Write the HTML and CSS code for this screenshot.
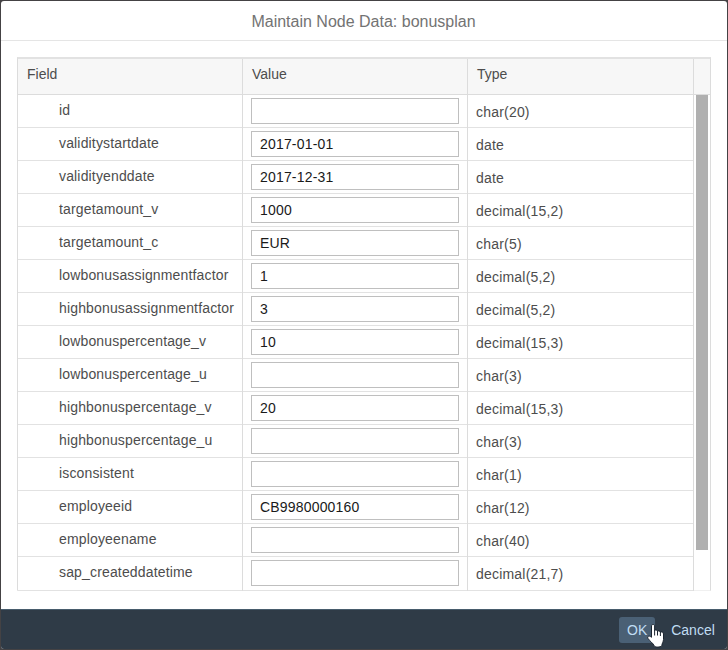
FILE: index.html
```
<!DOCTYPE html>
<html lang="en">
<head>
<meta charset="utf-8">
<title>Maintain Node Data: bonusplan</title>
<link rel="stylesheet" href="styles.css">
</head>
<body>
<div class="dialog">
  <header class="title"><span>Maintain Node Data: bonusplan</span></header>
  <main class="content">
    <div class="table">
      <div class="head">
        <div class="cell">Field</div><div class="cell">Value</div><div class="cell">Type</div><div class="corner"></div>
      </div>
      <div class="body">
        <div class="rows">
          <div class="row"><div class="field"><span>id</span></div><div class="value"><input type="text" value=""></div><div class="type"><span>char(20)</span></div></div>
          <div class="row"><div class="field"><span>validitystartdate</span></div><div class="value"><input type="text" value="2017-01-01"></div><div class="type"><span>date</span></div></div>
          <div class="row"><div class="field"><span>validityenddate</span></div><div class="value"><input type="text" value="2017-12-31"></div><div class="type"><span>date</span></div></div>
          <div class="row"><div class="field"><span>targetamount_v</span></div><div class="value"><input type="text" value="1000"></div><div class="type"><span>decimal(15,2)</span></div></div>
          <div class="row"><div class="field"><span>targetamount_c</span></div><div class="value"><input type="text" value="EUR"></div><div class="type"><span>char(5)</span></div></div>
          <div class="row"><div class="field"><span>lowbonusassignmentfactor</span></div><div class="value"><input type="text" value="1"></div><div class="type"><span>decimal(5,2)</span></div></div>
          <div class="row"><div class="field"><span>highbonusassignmentfactor</span></div><div class="value"><input type="text" value="3"></div><div class="type"><span>decimal(5,2)</span></div></div>
          <div class="row"><div class="field"><span>lowbonuspercentage_v</span></div><div class="value"><input type="text" value="10"></div><div class="type"><span>decimal(15,3)</span></div></div>
          <div class="row"><div class="field"><span>lowbonuspercentage_u</span></div><div class="value"><input type="text" value=""></div><div class="type"><span>char(3)</span></div></div>
          <div class="row"><div class="field"><span>highbonuspercentage_v</span></div><div class="value"><input type="text" value="20"></div><div class="type"><span>decimal(15,3)</span></div></div>
          <div class="row"><div class="field"><span>highbonuspercentage_u</span></div><div class="value"><input type="text" value=""></div><div class="type"><span>char(3)</span></div></div>
          <div class="row"><div class="field"><span>isconsistent</span></div><div class="value"><input type="text" value=""></div><div class="type"><span>char(1)</span></div></div>
          <div class="row"><div class="field"><span>employeeid</span></div><div class="value"><input type="text" value="CB9980000160"></div><div class="type"><span>char(12)</span></div></div>
          <div class="row"><div class="field"><span>employeename</span></div><div class="value"><input type="text" value=""></div><div class="type"><span>char(40)</span></div></div>
          <div class="row"><div class="field"><span>sap_createddatetime</span></div><div class="value"><input type="text" value=""></div><div class="type"><span>decimal(21,7)</span></div></div>
        </div>
        <div class="scroll"><div class="thumb"></div></div>
      </div>
    </div>
  </main>
  <footer class="footer">
    <button class="btn ok">OK</button><button class="btn cancel">Cancel</button>
  </footer>
</div>
<svg class="cursor" width="18" height="24" viewBox="0 0 18 24">
  <path d="M4.5 2C4.5 0 7.6 0 7.6 2V6.5C8.6 5.6 10.2 6 10.4 7.2C11.5 6.5 13 7 13.2 8.2C14.5 7.6 16.4 8 16.5 10V15.5C16.3 18 15 19.5 14.8 21.5C13.5 23.6 8 23.6 7 21.5C6.5 19.5 2.5 17 .8 14.2C.2 12 2.2 11.3 4.5 13.3Z" fill="#fff" stroke="#1c2530" stroke-width="1"/>
  <path d="M7.6 6V11.5M10.5 7V11.5M13.4 8V12" stroke="#1c2530" stroke-width="1" fill="none"/>
</svg>
</body>
</html>
```
FILE: styles.css
```
* { box-sizing: border-box; }
body {
  margin: 0;
  padding: 1px;
  height: 650px;
  overflow: hidden;
  background: #444244;
  color: #4d4d4d;
  font: 14px/18px "Liberation Sans", Arial, sans-serif;
}
.dialog {
  display: flex;
  flex-direction: column;
  width: 726px;
  height: 648px;
  border-radius: 3px;
  overflow: hidden;
  background: #fff;
}
.title {
  height: 40px;
  flex: none;
  padding-right: 1px;
  border-bottom: 1px solid #e5e5e5;
  text-align: center;
  color: #737373;
  font-size: 16px;
  line-height: 41px;
}
.content { flex: 1; padding: 16px; }
.table {
  width: 694px;
  height: 534px;
  border: 1px solid #dcdcdc;
  border-top: 2px solid #e2e2e2;
  border-bottom-color: #f0f0f0;
}
.head {
  display: grid;
  grid-template-columns: 225px 225px 226px 16px;
  height: 36px;
  background: #f7f7f7;
  border-bottom: 1px solid #dcdcdc;
}
.cell { padding: 6px 9px; border-right: 1px solid #dcdcdc; }
.body { display: flex; }
.rows { width: 676px; border-right: 1px solid #dcdcdc; }
.row {
  display: grid;
  grid-template-columns: 225px 225px 225px;
  height: 33px;
  border-bottom: 1px solid #e2e2e2;
}
.row:last-child { height: 34px; }
.field {
  padding: 6px 0 0 41px;
  border-right: 1px solid #dcdcdc;
  white-space: nowrap;
  letter-spacing: .155px;
}
.value { padding: 3px 8px; border-right: 1px solid #dcdcdc; }
.type { padding: 8px; letter-spacing: .2px; }
input {
  display: block;
  width: 208px;
  height: 26px;
  margin: 0;
  padding: 0 8px;
  border: 1px solid #bfbfbf;
  border-radius: 0;
  background: #fff;
  color: #1a1a1a;
  font: 14px "Liberation Sans", Arial, sans-serif;
  letter-spacing: .18px;
}
.scroll { padding-left: 2px; }
.thumb { width: 12px; height: 455px; background: #b0b0b0; }
.footer {
  display: flex;
  flex: none;
  justify-content: flex-end;
  gap: 8px;
  height: 40px;
  padding: 7px 4px 0 0;
  border-top: 1px solid #475c6c;
  background: #2f3b47;
}
.btn {
  height: 26px;
  padding: 0 8px;
  border: 0;
  border-radius: 3px;
  background: transparent;
  color: #c0ddf3;
  font: 14px "Liberation Sans", Arial, sans-serif;
}
.ok { width: 36px; background: #4a6075; }
.cancel { width: 60px; }
.cursor { position: absolute; left: 647px; top: 624px; }
```
